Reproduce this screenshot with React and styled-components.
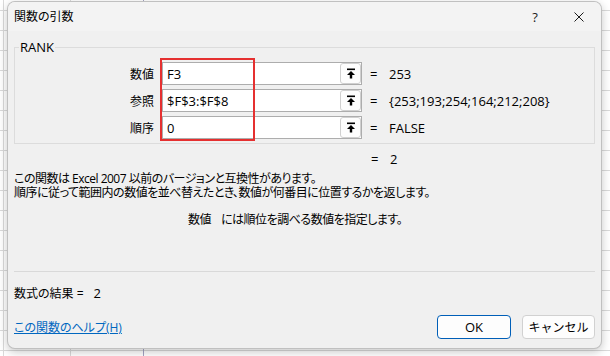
import React from "react";
import styled, { createGlobalStyle } from "styled-components";

const GlobalStyle = createGlobalStyle`
  html, body {
    margin: 0;
    padding: 0;
  }
  body {
    width: 610px;
    height: 356px;
    overflow: hidden;
    background-color: #ffffff;
    background-image:
      linear-gradient(to right, transparent 3px, #dadada 3px 4px, transparent 4px 70px, #dadada 70px 71px, transparent 71px 143px, #a4a4c4 143px 144px, transparent 144px),
      repeating-linear-gradient(to bottom, transparent 0 10px, #dadada 10px 11px, transparent 11px 20px);
    font-family: "Open Sans", "Noto Sans CJK JP", sans-serif;
    font-size: 12px;
    color: #000;
  }
`;

const Page = styled.div`
  padding: 1px 8px 8px 7px;
`;

const Dialog = styled.div`
  width: 595px;
  box-sizing: border-box;
  background: #f0f0f0;
  border: 1px solid rgba(0, 0, 0, 0.2);
  border-radius: 8px;
  box-shadow: 0 3px 10px rgba(0, 0, 0, 0.22);
  overflow: hidden;
  font-feature-settings: "palt";
`;

const TitleBar = styled.div`
  height: 29px;
  display: flex;
  align-items: center;
  background: #f3f3f3;
  padding-left: 6px;
`;

const Title = styled.div`
  flex: 1;
  font-size: 12px;
  line-height: 14px;
`;

const CaptionButton = styled.div`
  width: 44px;
  height: 29px;
  display: flex;
  align-items: center;
  justify-content: center;
  font-size: 13px;
  color: #1b1b1b;
`;

const Body = styled.div`
  display: flex;
  flex-direction: column;
  padding: 10px 6px 9px 6px;
`;

const Group = styled.fieldset`
  margin: 0;
  padding: 8px 0 4px 0;
  min-width: 0;
  border: 1px solid #dcdcdc;
`;

const Legend = styled.legend`
  margin-left: 4px;
  padding: 0 1px;
  font-size: 13px;
  line-height: 13px;
`;

const ArgGrid = styled.div`
  position: relative;
  display: grid;
  grid-template-columns: 139px 200px 1fr;
  grid-auto-rows: 23px;
  column-gap: 8px;
  row-gap: 4px;
`;

const ArgLabel = styled.div`
  display: flex;
  align-items: center;
  justify-content: flex-end;
  font-size: 12px;
`;

const Field = styled.div`
  display: flex;
  align-items: center;
  box-sizing: border-box;
  background: #ffffff;
  border: 1px solid #adadad;
  padding-left: 4px;
  font-size: 13px;
`;

const RefButton = styled.div`
  margin-left: auto;
  width: 21px;
  height: 21px;
  box-sizing: border-box;
  display: flex;
  align-items: center;
  justify-content: center;
  border: 1px solid #d0d0d0;
  border-radius: 3px;
  background: #fdfdfd;
`;

const Value = styled.div`
  display: flex;
  align-items: center;
  font-size: 13px;
`;

const Eq = styled.span`
  width: 19px;
  flex: none;
`;

const Highlight = styled.div`
  position: absolute;
  z-index: 2;
  left: 145px;
  top: -4px;
  width: 95px;
  height: 83px;
  box-sizing: border-box;
  border: 2px solid #e53030;
  pointer-events: none;
`;

const Total = styled.div`
  display: flex;
  margin-top: 8px;
  padding-left: 357px;
  line-height: 15px;
  font-size: 13px;
`;

const Description = styled.div`
  margin-top: 5px;
  line-height: 14px;
  letter-spacing: -0.5px;
`;

const ArgHelp = styled.div`
  margin-top: 13px;
  padding-left: 174px;
  line-height: 14px;
  letter-spacing: -0.5px;
`;

const ArgName = styled.span`
  margin-right: 10px;
`;

const Separator = styled.div`
  margin-top: 44px;
  height: 1px;
  background: #d9d9d9;
`;

const Result = styled.div`
  margin-top: 14px;
  line-height: 14px;
`;

const ResultValue = styled.span`
  margin-left: 10px;
  font-size: 13px;
`;

const Footer = styled.div`
  margin-top: 14px;
  display: flex;
  align-items: center;
  justify-content: space-between;
`;

const HelpLink = styled.a`
  color: #0067c0;
  text-decoration: underline;
  text-underline-offset: 1px;
  cursor: pointer;
`;

const Buttons = styled.div`
  display: flex;
  gap: 11px;
`;

const Button = styled.button`
  width: ${({ $w }) => $w}px;
  height: 24px;
  box-sizing: border-box;
  border: 1px solid ${({ $primary }) => ($primary ? "#005fb8" : "#d1d1d1")};
  border-radius: 4px;
  background: #fdfdfd;
  font-family: inherit;
  font-size: ${({ $primary }) => ($primary ? "13px" : "12px")};
  color: #000;
  padding: 0;
`;

const UpArrow = () => (
  <svg width="10" height="11" viewBox="0 0 10 11">
    <rect x="1" y="0.5" width="8" height="1.6" fill="#000" />
    <path d="M5 3 L1 7 L3.8 7 L3.8 10.5 L6.2 10.5 L6.2 7 L9 7 Z" fill="#000" />
  </svg>
);

const CloseIcon = () => (
  <svg width="10" height="10" viewBox="0 0 10 10">
    <path d="M0.5 0.5 L9.5 9.5 M9.5 0.5 L0.5 9.5" stroke="#1b1b1b" strokeWidth="1" />
  </svg>
);

const args = [
  { name: "数値", text: "F3", value: "253" },
  { name: "参照", text: "$F$3:$F$8", value: "{253;193;254;164;212;208}" },
  { name: "順序", text: "0", value: "FALSE" },
];

export default function App() {
  return (
    <>
      <GlobalStyle />
      <Page>
        <Dialog>
          <TitleBar>
            <Title>関数の引数</Title>
            <CaptionButton>?</CaptionButton>
            <CaptionButton>
              <CloseIcon />
            </CaptionButton>
          </TitleBar>
          <Body>
            <Group>
              <Legend>RANK</Legend>
              <ArgGrid>
                {args.map((a) => (
                  <React.Fragment key={a.name}>
                    <ArgLabel>{a.name}</ArgLabel>
                    <Field>
                      {a.text}
                      <RefButton>
                        <UpArrow />
                      </RefButton>
                    </Field>
                    <Value>
                      <Eq>=</Eq>
                      {a.value}
                    </Value>
                  </React.Fragment>
                ))}
                <Highlight />
              </ArgGrid>
            </Group>
            <Total>
              <Eq>=</Eq>2
            </Total>
            <Description>
              この関数は Excel 2007 以前のバージョンと互換性があります。
              <br />
              順序に従って範囲内の数値を並べ替えたとき、数値が何番目に位置するかを返します。
            </Description>
            <ArgHelp>
              <ArgName>数値</ArgName>には順位を調べる数値を指定します。
            </ArgHelp>
            <Separator />
            <Result>
              数式の結果 =<ResultValue>2</ResultValue>
            </Result>
            <Footer>
              <HelpLink>この関数のヘルプ(H)</HelpLink>
              <Buttons>
                <Button $primary $w={74}>OK</Button>
                <Button $w={73}>キャンセル</Button>
              </Buttons>
            </Footer>
          </Body>
        </Dialog>
      </Page>
    </>
  );
}
